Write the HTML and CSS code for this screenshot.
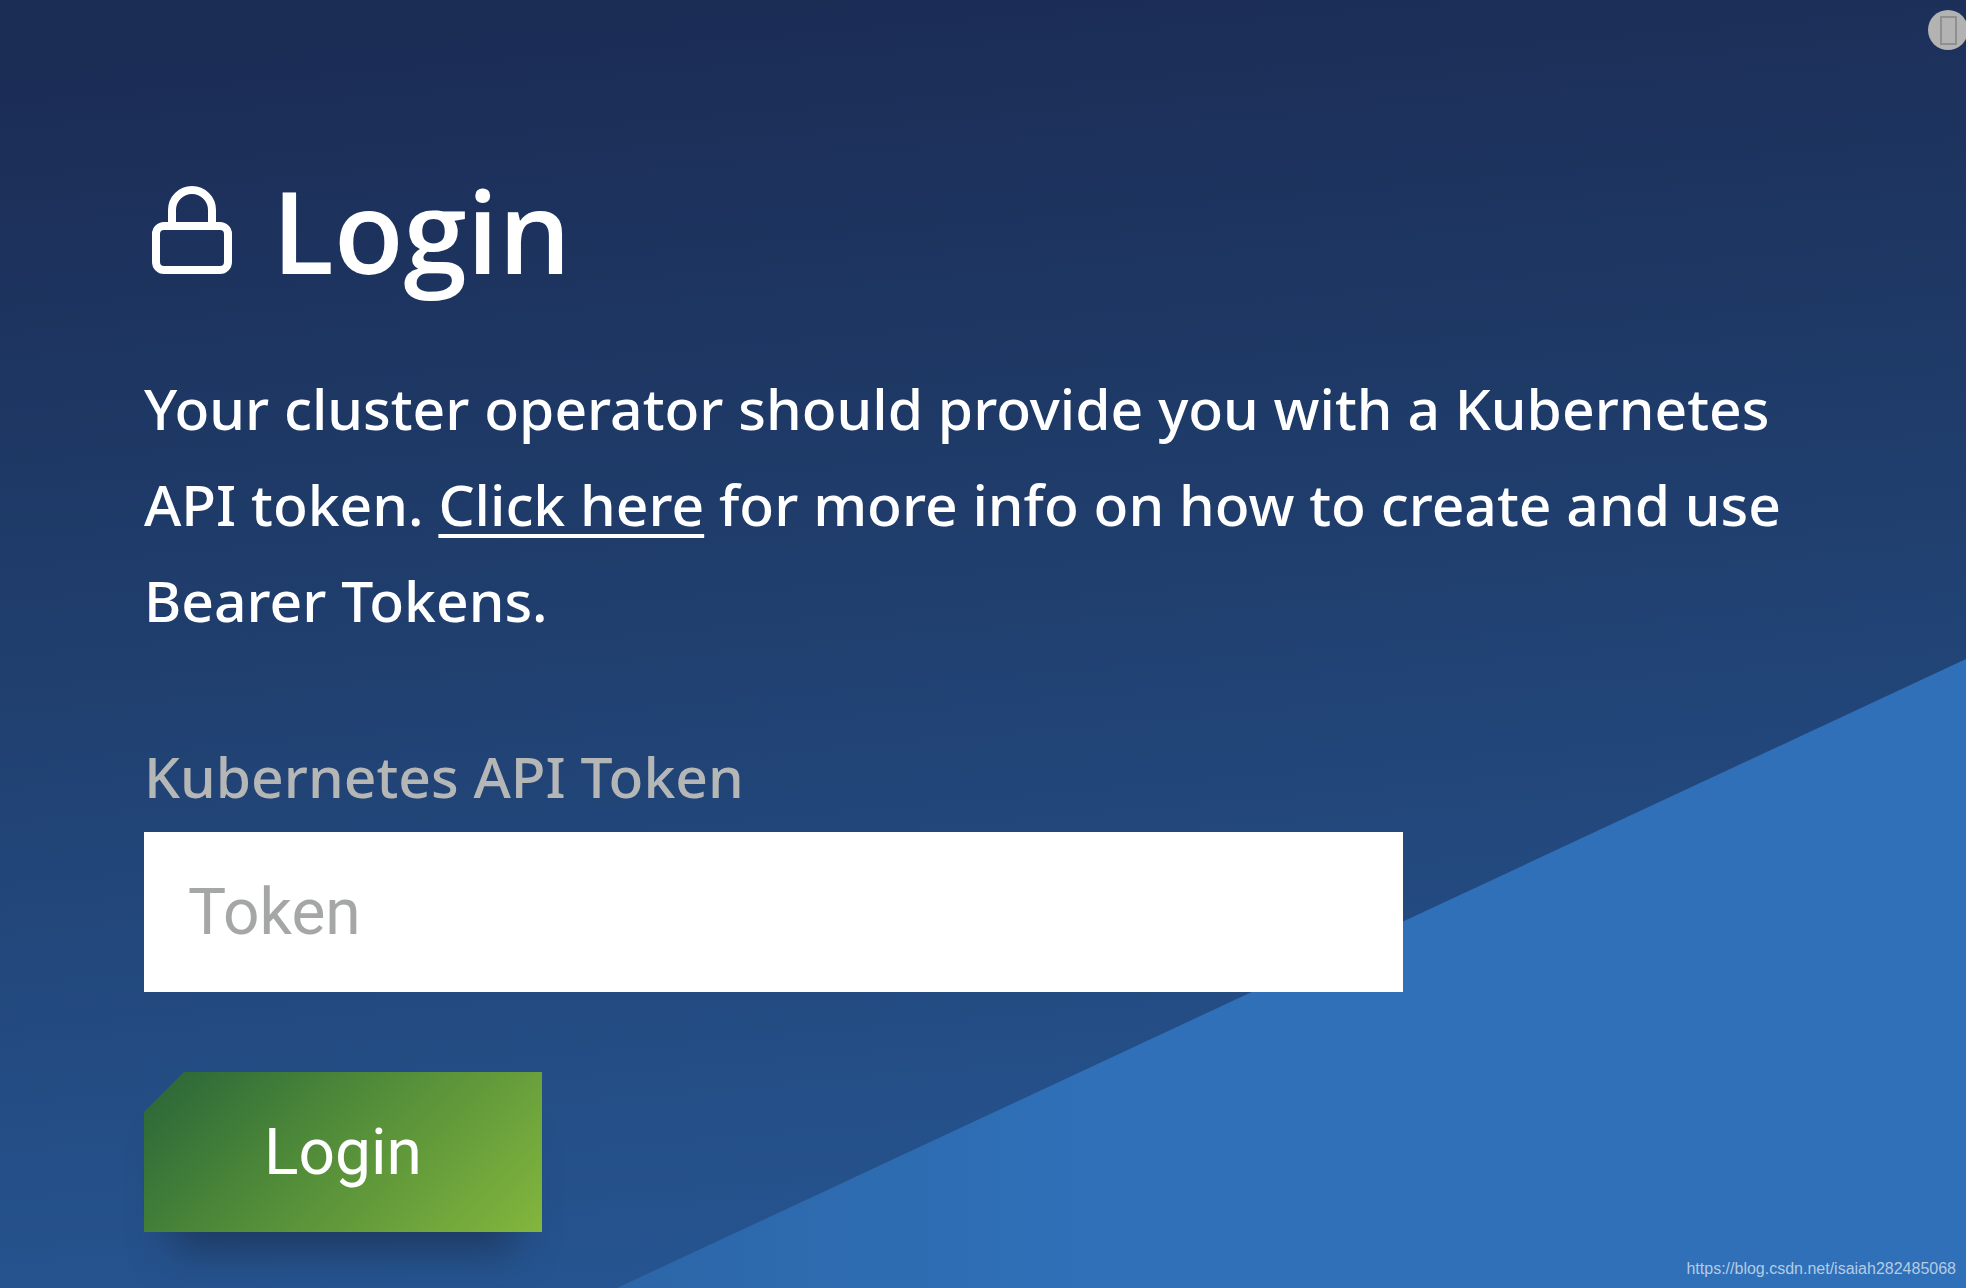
FILE: index.html
```html
<!DOCTYPE html>
<html lang="en">
<head>
    <meta charset="UTF-8">
    <meta name="viewport" content="width=device-width, initial-scale=1.0">
    <title>Login</title>
    <link rel="stylesheet" href="styles.css">
</head>
<body>
    <svg class="backdrop" viewBox="0 0 1966 1288" preserveAspectRatio="none" aria-hidden="true">
        <defs>
            <linearGradient id="slope" x1="0" y1="0" x2="1" y2="0">
                <stop offset="0" stop-color="#2c66a8"/>
                <stop offset="0.35" stop-color="#2f70b8"/>
            </linearGradient>
        </defs>
        <path d="M617 1288L1966 659V1288Z" fill="url(#slope)"/>
    </svg>
    <main class="login">
        <h1>
            <svg class="lock" viewBox="0 0 96 88" fill="none" stroke="#fff" stroke-width="8" aria-hidden="true">
                <rect x="12" y="40" width="72" height="44" rx="8"/>
                <path d="M28 40V24a20 20 0 0 1 40 0v16"/>
            </svg>
            Login
        </h1>
        <p class="info">Your cluster operator should provide you with a Kubernetes API token. <a href="#">Click here</a> for more info on how to create and use Bearer Tokens.</p>
        <form>
            <label for="token">Kubernetes API Token</label>
            <input type="text" id="token" placeholder="Token">
            <div class="button-shadow">
                <button class="button" type="submit">Login</button>
            </div>
        </form>
    </main>
    <button class="corner-button" type="button" aria-label="Menu"><span class="glyph"></span></button>
    <div class="watermark">https://blog.csdn.net/isaiah282485068</div>
</body>
</html>
```

FILE: styles.css
```css
* {
    box-sizing: border-box;
}
body {
    margin: 0;
    min-height: 100vh;
    position: relative;
    overflow: hidden;
    background: linear-gradient(175deg, #1b2c55 4%, #1f3c6a 40%, #275896 100%);
    color: white;
    font-family: "Noto Sans", sans-serif;
    font-size: 57px;
    font-weight: 500;
}
.backdrop {
    position: absolute;
    inset: 0;
    width: 100%;
    height: 100%;
}
.login {
    position: relative;
    padding: 156px 144px 48px;
}
h1 {
    display: flex;
    align-items: center;
    gap: 32px;
    margin: 0;
    font-family: "Open Sans", sans-serif;
    font-size: 114px;
    font-weight: 600;
    line-height: 148px;
}
.lock {
    width: 96px;
    height: 88px;
}
.info {
    margin: 56px 0 80px;
    line-height: 96px;
}
.info a {
    color: white;
    text-decoration-thickness: 4px;
    text-underline-offset: 8px;
}
label {
    display: block;
    margin-bottom: 8px;
    color: #b5b7b7;
    line-height: 96px;
}
input {
    display: block;
    width: 75%;
    height: 160px;
    padding: 0 44px;
    border: none;
    border-radius: 0;
    font-family: Roboto, sans-serif;
    font-size: 64px;
}
input::placeholder {
    color: #a5a7a7;
}
.button-shadow {
    width: 398px;
    margin-top: 80px;
    box-shadow: 0 44px 40px -28px rgba(28, 50, 84, 0.8);
}
.button {
    display: block;
    width: 100%;
    height: 160px;
    border: none;
    background: linear-gradient(135deg, #2d6a38 6%, #4f8a39 42%, #83b63d 100%);
    clip-path: polygon(40px 0, 100% 0, 100% 100%, 0 100%, 0 40px);
    color: white;
    font-family: Roboto, sans-serif;
    font-size: 64px;
}
.corner-button {
    position: absolute;
    top: 10px;
    right: -2px;
    display: flex;
    align-items: center;
    justify-content: center;
    width: 40px;
    height: 40px;
    padding: 0;
    border: none;
    border-radius: 50%;
    background: #b3b3b3;
}
.glyph {
    width: 17px;
    height: 29px;
    border: 2px solid #909090;
}
.watermark {
    position: absolute;
    right: 10px;
    bottom: 10px;
    font-family: "Liberation Sans", sans-serif;
    font-size: 16px;
    font-weight: 400;
    color: #b5cbe5;
}
```
